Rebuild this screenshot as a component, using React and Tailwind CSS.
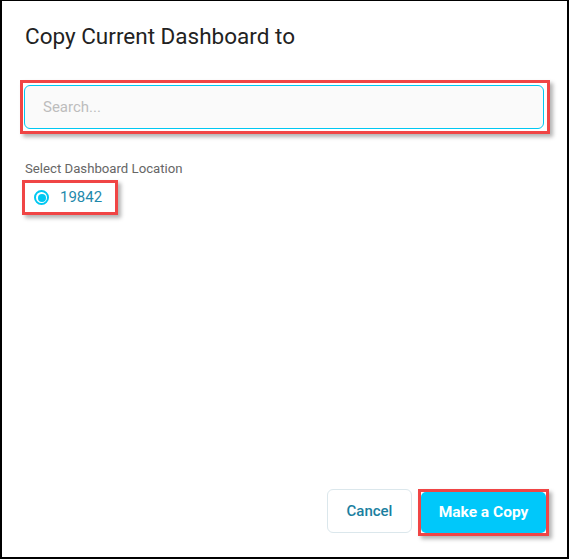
export default function App() {
	return (
		<div
			className="w-[569px] h-[559px] bg-white border-black border-t border-l-2 border-r-2 border-b-2 flex flex-col"
			style={{ fontFamily: "Roboto, 'Liberation Sans', sans-serif" }}
		>
			<h1 className="ml-[23px] mt-[21px] text-[22.5px] leading-[28px] text-[#222222]">
				Copy Current Dashboard to
			</h1>

			<div className="ml-[18px] mt-[30px] w-[530px] border-[3px] border-[#f04545] shadow-[3px_3px_4px_rgba(0,0,0,0.3)] px-[1px] py-[2px]">
				<input
					className="w-[520px] h-[44px] rounded-[6px] border border-[#00c8f2] bg-[#fafafa] pl-[18px] text-[15px] text-[#333] placeholder-[#bdbdbd] outline-none"
					placeholder="Search..."
				/>
			</div>

			<p className="ml-[23px] mt-[27px] text-[13.2px] leading-[16px] text-[#666666]">
				Select Dashboard Location
			</p>

			<div className="ml-[20px] mt-[3px] w-[96px] h-[35px] border-[3px] border-[#f04545] shadow-[3px_3px_4px_rgba(0,0,0,0.3)] flex items-center pl-[9px] gap-[11px]">
				<span className="w-[15px] h-[15px] rounded-full border-2 border-[#00c8f2] flex items-center justify-center">
					<span className="w-[8px] h-[8px] rounded-full bg-[#00c8f2]" />
				</span>
				<span className="text-[15px] text-[#1f89ab]">19842</span>
			</div>

			<div className="mt-auto mb-[21px] mr-[18px] flex justify-end items-start gap-[6px]">
				<button className="w-[85px] h-[44px] rounded-[6px] border border-[#dbe7ec] bg-white text-[15px] font-medium text-[#1b7fa0]">
					Cancel
				</button>
				<div className="border-[3px] border-[#f04545] shadow-[3px_3px_4px_rgba(0,0,0,0.3)] p-0">
					<button className="w-[125px] h-[41px] rounded-[5px] bg-[#00c8fa] text-[15.5px] font-bold text-white">
						Make a Copy
					</button>
				</div>
			</div>
		</div>
	);
}
